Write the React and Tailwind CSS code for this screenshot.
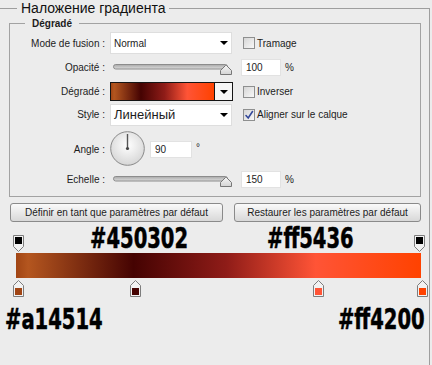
const GRADIENT =
  'bg-[linear-gradient(to_right,#a14514_0%,#b4561f_3%,#450302_29%,#8f1c18_52%,#ff5436_74%,#ff4200_100%)]';

const Arrow = () => (
  <svg width="8" height="4" viewBox="0 0 8 4">
    <path d="M0 0H8L4 4Z" fill="#000" />
  </svg>
);

const Checkbox = ({ checked }) => (
  <span className="flex h-[12px] w-[12px] items-center justify-center border border-[#8e8f8f] bg-linear-to-br from-[#d6d6d6] to-[#f8f8f8]">
    {checked && (
      <svg width="10" height="10" viewBox="0 0 10 10" fill="none" stroke="#33489a" strokeWidth="1.6" strokeLinecap="round">
        <path d="M2 5.5L4.2 8L8.5 1.5" />
      </svg>
    )}
  </span>
);

const Label = ({ children }) => (
  <span className="w-[95px] text-right">{children}</span>
);

const Select = ({ children, big }) => (
  <div className="ml-[5px] flex h-[22px] w-[122px] items-center justify-between border border-[#dedede] bg-white pl-[3px] pr-[3px]">
    <span className={big ? 'text-[13px]' : ''}>{children}</span>
    <Arrow />
  </div>
);

const Slider = () => (
  <svg className="ml-[5px] self-start mt-[6px]" width="122" height="12" viewBox="0 0 122 12">
    <defs>
      <linearGradient id="trk" x1="0" y1="0" x2="0" y2="1">
        <stop offset="0" stopColor="#a8a8a8" />
        <stop offset="1" stopColor="#dcdcdc" />
      </linearGradient>
      <linearGradient id="thm" x1="0" y1="0" x2="0" y2="1">
        <stop offset="0" stopColor="#f4f4f4" />
        <stop offset="1" stopColor="#d4d4d4" />
      </linearGradient>
    </defs>
    <rect x="3.5" y="0.5" width="114" height="4.5" rx="2.2" fill="url(#trk)" stroke="#8c8c8c" />
    <path d="M110.5 10.5V6.5L115.5 1.5H116.5L121.5 6.5V10.5Z" fill="url(#thm)" stroke="#777" strokeLinejoin="round" />
  </svg>
);

const NumInput = ({ value, className = '' }) => (
  <div className={`flex h-[17px] w-[40px] items-center border border-[#e2e2e2] bg-white pl-[4px] ${className}`}>
    {value}
  </div>
);

const TopStop = () => (
  <svg width="11" height="17" viewBox="0 0 11 17">
    <path d="M0.5 0.5H10.5V11.5L5.5 16.5L0.5 11.5Z" fill="#f2f2f2" stroke="#7d7d7d" />
    <rect x="2" y="2" width="7" height="7" fill="#000" />
  </svg>
);

const BottomStop = ({ color, className = '' }) => (
  <svg className={className} width="11" height="17" viewBox="0 0 11 17">
    <path d="M5.5 0.5L10.5 5.5V16.5H0.5V5.5Z" fill="#f2f2f2" stroke="#7d7d7d" />
    <rect x="2" y="8" width="7" height="7" fill={color} />
  </svg>
);

const Dial = () => (
  <svg className="ml-[5px]" width="36" height="36" viewBox="0 0 36 36">
    <defs>
      <radialGradient id="dial" cx="0.5" cy="0.4" r="0.6">
        <stop offset="0" stopColor="#ffffff" />
        <stop offset="1" stopColor="#d6d6d6" />
      </radialGradient>
    </defs>
    <circle cx="17.5" cy="17.5" r="16.8" fill="url(#dial)" stroke="#8a8a8a" />
    <path d="M17.5 17.5V3" stroke="#555" strokeWidth="1.4" />
    <circle cx="17.5" cy="17.5" r="1.6" fill="#444" />
  </svg>
);

// big annotation labels, condensed like Impact
const Hex = ({ children, className = '' }) => (
  <span
    className={`inline-block scale-x-[0.75] font-['DejaVu_Sans_Condensed','DejaVu_Sans',sans-serif] text-[29px] leading-none font-bold text-black [-webkit-text-stroke:0.5px_black] ${className}`}
  >
    {children}
  </span>
);

export default function App() {
  return (
    <div className="h-[365px] w-[432px] overflow-hidden bg-[#ececec] font-['Liberation_Sans',Arial,sans-serif] text-[10px] text-[#1c1c1c]">
      <fieldset className="h-[380px] w-[430px] border-t border-r border-[#9e9e9e]">
        <legend className="ml-[17px] px-[4px] text-[14px] leading-[17px] text-[#111]">
          Наложение градиента
        </legend>

        <fieldset className="ml-[9px] w-[412px] border border-[#a2a2a2] pb-[7px]">
          <legend className="ml-[15px] px-[7px] text-[10px] leading-[13px] font-bold">Dégradé</legend>

          <div className="mt-[2px] flex h-[22px] items-center">
            <Label>Mode de fusion :</Label>
            <Select>Normal</Select>
            <span className="ml-[11px]"><Checkbox /></span>
            <span className="ml-[2px]">Tramage</span>
          </div>

          <div className="mt-[4px] flex h-[19px] items-center">
            <Label>Opacité :</Label>
            <Slider />
            <NumInput value="100" className="ml-[9px]" />
            <span className="ml-[4px] self-start mt-[2px]">%</span>
          </div>

          <div className="mt-[5px] flex h-[19px] items-center">
            <Label>Dégradé :</Label>
            <div className="ml-[5px] flex h-[19px] w-[123px]">
              <div className={`flex-1 border border-[#151515] ${GRADIENT}`} />
              <div className="-ml-px flex w-[19px] items-center justify-center border border-[#151515] bg-[#f6f6f6]">
                <Arrow />
              </div>
            </div>
            <span className="ml-[10px]"><Checkbox /></span>
            <span className="ml-[2px]">Inverser</span>
          </div>

          <div className="mt-[3px] flex h-[21px] items-center">
            <Label>Style :</Label>
            <Select big>Линейный</Select>
            <span className="ml-[11px]"><Checkbox checked /></span>
            <span className="ml-[2px]">Aligner sur le calque</span>
          </div>

          <div className="mt-[6px] flex h-[36px] items-center">
            <Label>Angle :</Label>
            <Dial />
            <NumInput value="90" className="ml-[4px] w-[42px]" />
            <span className="ml-[4px] self-start mt-[9px]">°</span>
          </div>

          <div className="mt-[3px] flex h-[19px] items-center">
            <Label>Echelle :</Label>
            <Slider />
            <NumInput value="150" className="ml-[9px]" />
            <span className="ml-[4px] self-start mt-[2px]">%</span>
          </div>
        </fieldset>

        <div className="mt-[6px] ml-[10px] flex gap-[11px]">
          <button className="h-[19px] w-[213px] rounded-[3px] border border-[#8a8a8a] bg-linear-to-b from-[#fafafa] to-[#d8d8d8]">
            Définir en tant que paramètres par défaut
          </button>
          <button className="h-[19px] w-[187px] rounded-[3px] border border-[#8a8a8a] bg-linear-to-b from-[#fafafa] to-[#d8d8d8]">
            Restaurer les paramètres par défaut
          </button>
        </div>

        <div className="mt-[3px] flex h-[27px] items-end">
          <span className="ml-[13px]"><TopStop /></span>
          <Hex className="ml-[66px] self-start -mt-px origin-left">#450302</Hex>
          <Hex className="ml-[46px] self-start -mt-px origin-left">#ff5436</Hex>
          <span className="ml-auto mr-[4px]"><TopStop /></span>
        </div>

        <div className={`mt-px ml-[16px] h-[25px] w-[405px] ${GRADIENT}`} />

        <div className="mt-[2px] flex">
          <BottomStop color="#a14514" className="ml-[13px]" />
          <BottomStop color="#450302" className="ml-[106px]" />
          <BottomStop color="#ff5436" className="ml-[172px]" />
          <BottomStop color="#ff4200" className="ml-[93px]" />
        </div>

        <div className="mt-[8px] flex w-[425px] justify-between">
          <Hex className="ml-[5px] origin-left">#a14514</Hex>
          <Hex className="origin-right">#ff4200</Hex>
        </div>
      </fieldset>
    </div>
  );
}
